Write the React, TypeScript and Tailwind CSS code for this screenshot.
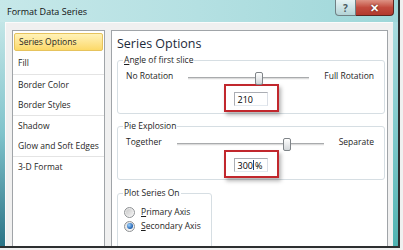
import React from "react";

const ui = "font-['Open_Sans','Noto_Sans',sans-serif]";

const listGroups = [
  ["Fill"],
  ["Border Color", "Border Styles"],
  ["Shadow", "Glow and Soft Edges"],
  ["3-D Format"],
];

function Slider({ pct }: { pct: number }) {
  return (
    <div className="relative h-[16px] flex-1">
      <div className="absolute left-0 right-0 top-[9px] h-[3px] border-t border-b border-t-[#a9abad] border-b-[#f6f6f6] bg-[#dcdcdc]" />
      <div
        className="absolute top-[4px] h-[13px] w-[8px] -translate-x-1/2 rounded-[2px] border border-[#7f8488] bg-gradient-to-b from-white to-[#d3d7da]"
        style={{ left: `${pct}%` }}
      />
    </div>
  );
}

function Group({ label, className, children }: { label: React.ReactNode; className?: string; children: React.ReactNode }) {
  return (
    <div className={`relative rounded-[3px] border border-[#d6dee3] ${className ?? ""}`}>
      <span className="absolute left-[5px] top-[-7px] bg-white px-[1px] text-[8.5px] leading-[12px] text-[#1e1e1e]">{label}</span>
      {children}
    </div>
  );
}

function SliderGroup({ label, left, right, pct, value }: { label: React.ReactNode; left: string; right: string; pct: number; value: React.ReactNode }) {
  return (
    <Group label={label} className="pt-[7px] pb-[1px]">
      <div className="flex h-[16px] items-center gap-[15px] pl-[8px] pr-[10px] text-[8.5px] text-[#1e1e1e]">
        <span>{left}</span>
        <Slider pct={pct} />
        <span>{right}</span>
      </div>
      <div className="mx-auto flex h-[28px] w-[55px] border-2 border-[#c1272d] pl-[8px] pt-[6px] shadow-[2px_3px_4px_rgba(0,0,0,0.3)]">
        <div className="flex h-[14px] w-[34px] items-center border border-[#abadb3] border-b-[#e3e9ef] border-r-[#dbdfe6] bg-white pl-[3px] text-[9px] leading-none text-black">
          {value}
        </div>
      </div>
    </Group>
  );
}

function Radio({ checked, children }: { checked?: boolean; children: React.ReactNode }) {
  return (
    <div className="flex h-[14px] items-center gap-[6px] pl-[6px] text-[8.5px] text-[#1e1e1e]">
      <span className="flex h-[11px] w-[11px] items-center justify-center rounded-full border border-[#8e9194] bg-gradient-to-br from-[#e4e4e4] to-[#f8f8f8]">
        {checked ? (
          <span className="h-[6px] w-[6px] rounded-full bg-[radial-gradient(circle_at_35%_35%,#9fd3ff,#1f5fae_70%)]" />
        ) : (
          <span className="h-[7px] w-[7px] rounded-full bg-gradient-to-br from-[#c9c9c9] to-[#f2f2f2]" />
        )}
      </span>
      <span>{children}</span>
    </div>
  );
}

export default function App() {
  return (
    <div className={`h-[250px] w-[403px] overflow-hidden bg-[#f0f0f0] ${ui}`}>
      <div className="flex h-[248px] w-[400px] flex-col border-b-2 border-r-2 border-[#2d2f30]">
        {/* Title bar */}
        <div className="flex h-[22px] items-start bg-gradient-to-r from-[#c6e8e9] via-[#b4e0e2] to-[#9ed7d9]">
          <span className="pl-[7px] pt-[5px] text-[9px] leading-[14px] text-[#111]">Format Data Series</span>
          <div className="ml-auto mr-[4px] flex">
            <div className="flex h-[16px] w-[21px] items-center justify-center rounded-bl-[4px] border border-t-0 border-[#6f8084] bg-gradient-to-b from-[#e6f3f4] to-[#b3d3d6] text-[10px] font-bold leading-none text-[#4b5a60]">
              ?
            </div>
            <div className="flex h-[16px] w-[38px] items-center justify-center rounded-br-[4px] border border-l-0 border-t-0 border-[#5b2620] bg-gradient-to-b from-[#dd9284] via-[#c24b3e] to-[#b23a2e] text-[11px] font-bold leading-none text-white [text-shadow:0_0_2px_#3a120e]">
              ✕
            </div>
          </div>
        </div>

        {/* Body */}
        <div className="flex flex-1 overflow-hidden">
          <div className="w-[5px] bg-gradient-to-b from-[#c3e6e7] via-[#7fc3cb] to-[#2a7487]" />
          <div className="flex flex-1 gap-[6px] border-l border-t border-[#fbfbfb] bg-[#f0f0f0] pl-[6px] pr-[5px] pt-[7px]">
            {/* Category list */}
            <div className="w-[93px] border border-b-0 border-[#a0a4a8] bg-white pt-[1px]">
              <div className="flex h-[20px] items-center">
                <div className="mx-[1px] flex h-[18px] flex-1 items-center rounded-[2px] border border-[#e6c35d] bg-gradient-to-b from-[#fff2b8] to-[#fcd967] pl-[4px] text-[8.5px] text-[#1e1e1e]">
                  Series Options
                </div>
              </div>
              {listGroups.map((g, i) => (
                <div key={i} className={i === 0 ? "" : "border-t border-[#e4e4e4]"}>
                  {g.map((t) => (
                    <div key={t} className={`flex items-center pl-[5px] text-[8.5px] text-[#262626] ${i === 0 ? "h-[22px]" : "h-[20px]"}`}>
                      {t}
                    </div>
                  ))}
                </div>
              ))}
            </div>

            {/* Options panel */}
            <div className="w-[277px] border border-b-0 border-[#a0a4a8] bg-white pl-[5px] pr-[2px] pt-[5px]">
              <div className="text-[12.5px] leading-[16px] text-[#1c2a3a]">Series Options</div>
              <div className="mt-[8px]">
                <SliderGroup
                  label={<><span className="underline">A</span>ngle of first slice</>}
                  left="No Rotation"
                  right="Full Rotation"
                  pct={58.3}
                  value="210"
                />
              </div>
              <div className="mt-[12px]">
                <SliderGroup
                  label="Pie Explosion"
                  left="Together"
                  right="Separate"
                  pct={75}
                  value={<>300<span className="mx-[0.5px] inline-block h-[10px] w-[1px] bg-[#1d3f7a]" />%</>}
                />
              </div>
              <Group label="Plot Series On" className="mt-[13px] h-[60px] w-[95px] pt-[11px]">
                <Radio>
                  <span className="underline">P</span>rimary Axis
                </Radio>
                <Radio checked>
                  <span className="underline">S</span>econdary Axis
                </Radio>
              </Group>
            </div>
          </div>
          <div className="w-[5px] bg-gradient-to-b from-[#a9dcdf] via-[#7fcacc] to-[#4fb3b2]" />
        </div>
      </div>
    </div>
  );
}
